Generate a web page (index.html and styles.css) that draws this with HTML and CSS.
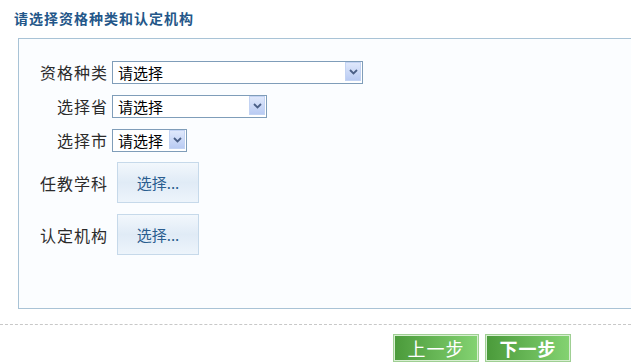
FILE: index.html
```html
<!DOCTYPE html>
<html lang="zh-CN">
<head>
    <meta charset="UTF-8">
    <title>资格认定</title>
    <link rel="stylesheet" href="styles.css">
</head>
<body>
    <h2 class="title">请选择资格种类和认定机构</h2>
    <div class="panel">
        <div class="form-grid">
            <label class="label">资格种类</label>
            <span class="select-wrap wide">
                <select><option>请选择</option></select>
                <span class="arrow"><svg width="9" height="6" viewBox="0 0 9 6"><path d="M1 1 L4.5 4.5 L8 1" fill="none" stroke="#4a5f86" stroke-width="1.8"/></svg></span>
            </span>

            <label class="label">选择省</label>
            <span class="select-wrap mid">
                <select><option>请选择</option></select>
                <span class="arrow"><svg width="9" height="6" viewBox="0 0 9 6"><path d="M1 1 L4.5 4.5 L8 1" fill="none" stroke="#4a5f86" stroke-width="1.8"/></svg></span>
            </span>

            <label class="label">选择市</label>
            <span class="select-wrap small">
                <select><option>请选择</option></select>
                <span class="arrow"><svg width="9" height="6" viewBox="0 0 9 6"><path d="M1 1 L4.5 4.5 L8 1" fill="none" stroke="#4a5f86" stroke-width="1.8"/></svg></span>
            </span>

            <label class="label">任教学科</label>
            <button class="pick">选择...</button>

            <label class="label">认定机构</label>
            <button class="pick">选择...</button>
        </div>
    </div>
    <div class="divider"></div>
    <div class="actions">
        <button class="step">上一步</button>
        <button class="step next">下一步</button>
    </div>
</body>
</html>
```

FILE: styles.css
```css
body {
    margin: 0;
    background-color: #fff;
    font-family: "Noto Sans CJK SC", "DejaVu Sans", sans-serif;
    color: #333;
}

.title {
    margin: 0;
    padding: 8px 0 0 14px;
    font-size: 14px;
    line-height: 20px;
    font-weight: bold;
    letter-spacing: 1px;
    color: #245789;
}

.panel {
    margin: 10px 0 0 18px;
    height: 271px;
    border: 1px solid #a9c3d6;
    border-right: none;
    background-color: #fbfdff;
    padding-top: 21px;
    box-sizing: border-box;
}

.form-grid {
    display: grid;
    grid-template-columns: 89px auto;
    column-gap: 4px;
    row-gap: 11px;
    align-items: center;
    justify-items: start;
}

.label {
    justify-self: end;
    font-size: 16px;
    letter-spacing: 1px;
    color: #2b2b2b;
    line-height: 20px;
}

.select-wrap {
    position: relative;
    display: block;
    height: 23px;
}

.select-wrap select {
    appearance: none;
    -webkit-appearance: none;
    width: 100%;
    height: 23px;
    margin: 0;
    padding: 0 0 0 5px;
    border: 1px solid #7f9db9;
    background-color: #fff;
    font-family: "Noto Sans CJK SC", sans-serif;
    font-size: 15px;
    color: #000;
    border-radius: 0;
}

.wide { width: 251px; }
.mid { width: 155px; }
.small { width: 75px; }

.arrow {
    position: absolute;
    top: 2px;
    right: 2px;
    width: 16px;
    height: 19px;
    display: flex;
    align-items: center;
    justify-content: center;
    border: 1px solid #c3d3f3;
    box-sizing: border-box;
    background: linear-gradient(to bottom, #dfe8fb, #b9cbf3);
    pointer-events: none;
}

.pick {
    margin-left: 5px;
    width: 82px;
    height: 41px;
    border: 1px solid #c6d9ea;
    background: linear-gradient(to bottom, #f2f7fc, #e0ebf6 50%, #edf4fb);
    font-family: "Noto Sans CJK SC", sans-serif;
    font-size: 15px;
    color: #2a5d8f;
    padding: 0;
    cursor: pointer;
}

.divider {
    margin-top: 15px;
    border-top: 1px dashed #c8c8c8;
}

.actions {
    display: flex;
    justify-content: flex-end;
    gap: 6px;
    padding: 9px 60px 0 0;
}

.step {
    width: 86px;
    height: 28px;
    padding: 0;
    border: 1px solid #9fcf93;
    box-shadow: inset 0 0 0 1px #d8efd2;
    background: linear-gradient(to right, #4a9a3a, #84d372);
    color: #fff;
    font-family: "Noto Sans CJK SC", sans-serif;
    font-size: 18px;
    line-height: 26px;
    letter-spacing: 1px;
}

.step.next {
    font-weight: bold;
}
```
